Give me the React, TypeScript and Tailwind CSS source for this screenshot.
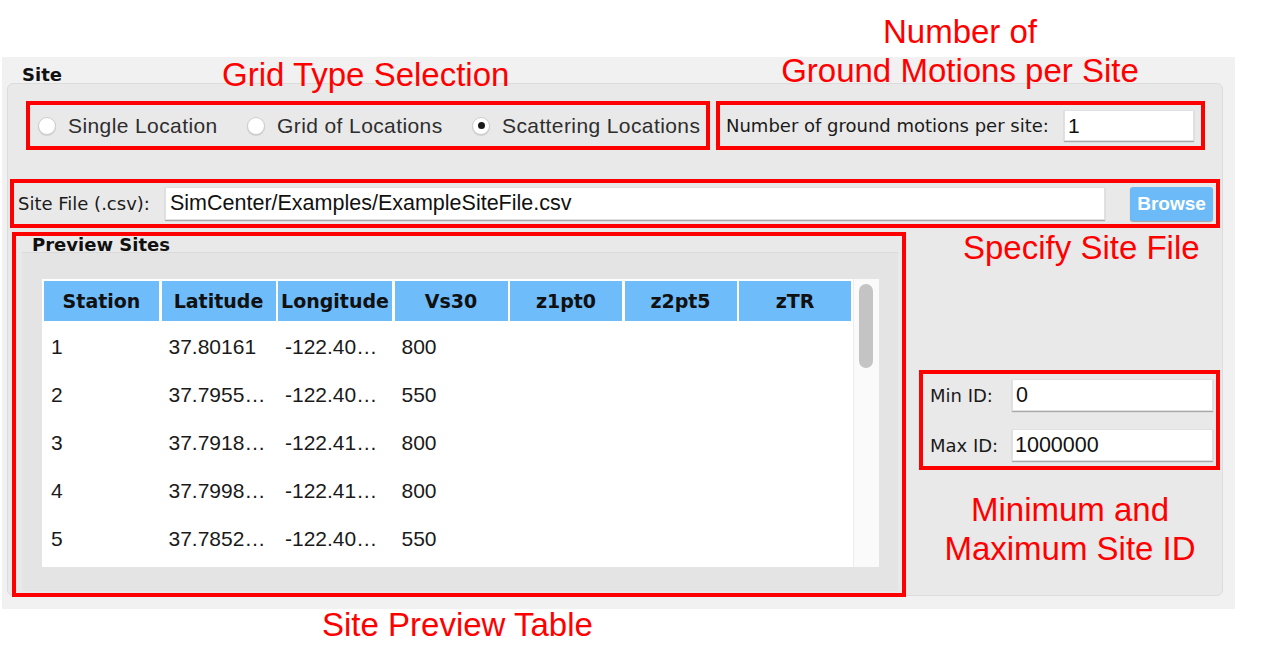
import React from 'react';

const ui = "font-['DejaVu_Sans',sans-serif]";
const mac = "font-['Liberation_Sans',Arial,sans-serif]";

const columns = [
  { name: 'Station', width: 'w-[115px]' },
  { name: 'Latitude', width: 'w-[114px]' },
  { name: 'Longitude', width: 'w-[114px]' },
  { name: 'Vs30', width: 'w-[113px]' },
  { name: 'z1pt0', width: 'w-[112px]' },
  { name: 'z2pt5', width: 'w-[112px]' },
  { name: 'zTR', width: 'w-[112px]' },
];

const rows = [
  ['1', '37.80161', '-122.40…', '800'],
  ['2', '37.7955…', '-122.40…', '550'],
  ['3', '37.7918…', '-122.41…', '800'],
  ['4', '37.7998…', '-122.41…', '800'],
  ['5', '37.7852…', '-122.40…', '550'],
];

const inputCls =
  'bg-white border border-[#e1e1e1] shadow-[0_1px_1px_rgba(0,0,0,0.28)] flex items-center text-[#111]';

function Radio({ label, checked, width }: { label: string; checked?: boolean; width: string }) {
  return (
    <div className={`flex items-center shrink-0 whitespace-nowrap ${width}`}>
      <span className="shrink-0 w-[18px] h-[18px] rounded-full bg-white border border-[#cdcdcd] shadow-[0_1px_1px_rgba(0,0,0,0.12)] flex items-center justify-center">
        {checked && <span className="w-[7px] h-[7px] rounded-full bg-[#1a1a1a]" />}
      </span>
      <span className={`${mac} ml-[12px] text-[21px] tracking-[0.4px] text-[#2e2e2e] leading-none`}>{label}</span>
    </div>
  );
}

export default function App() {
  return (
    <div className={`relative w-[1270px] h-[666px] bg-white overflow-hidden ${ui}`}>
      <div className="pt-[57px] pl-[2px]">
        {/* window */}
        <div className="w-[1233px] h-[552px] bg-[#f1f1f1]">
          <div className="relative z-10 ml-[20px] pt-[7px] h-[26px] text-[18px] leading-[22px] font-bold text-[#111]">
            Site
          </div>

          {/* Site group box */}
          <div className="ml-[5px] w-[1216px] h-[513px] rounded-[6px] border border-[#dcdcdc] bg-[#e9e9e9]">
            {/* row 1 */}
            <div className="flex mt-[17px] ml-[18px] gap-[6px]">
              <div className="w-[684px] h-[49px] border-4 border-[#ff0000] flex items-center pl-[8px] overflow-hidden">
                <Radio label="Single Location" width="w-[209px]" />
                <Radio label="Grid of Locations" width="w-[225px]" />
                <Radio label="Scattering Locations" checked width="w-[230px]" />
              </div>
              <div className="w-[489px] h-[49px] border-4 border-[#ff0000] flex items-center pl-[6px]">
                <span className="text-[18px] text-[#1a1a1a] whitespace-nowrap">Number of ground motions per site:</span>
                <div className={`${inputCls} ml-auto mr-[7px] w-[130px] h-[31px] pl-[3px]`}>
                  <span className={`${mac} text-[21px]`}>1</span>
                </div>
              </div>
            </div>

            {/* row 2 */}
            <div className="mt-[29px] ml-[2px] w-[1210px] h-[49px] border-4 border-[#ff0000] flex items-center pl-[4px]">
              <span className="w-[147px] text-[18px] text-[#1a1a1a] whitespace-nowrap">Site File (.csv):</span>
              <div className={`${inputCls} w-[940px] h-[33px] pl-[4px]`}>
                <span className={`${mac} text-[21.5px]`}>SimCenter/Examples/ExampleSiteFile.csv</span>
              </div>
              <button
                className={`${mac} ml-[25px] w-[83px] h-[34px] pt-[2px] rounded-[3px] bg-[#6cbbf8] text-white font-bold text-[19px] shadow-[0_1px_1px_rgba(0,0,0,0.3)]`}
              >
                Browse
              </button>
            </div>

            {/* row 3 */}
            <div className="flex mt-[4px] ml-[4px]">
              <div className="w-[894px] h-[365px] border-4 border-[#ff0000] flex flex-col">
                <div className="relative z-10 ml-[16px] h-[16px] text-[18px] leading-[18px] font-bold text-[#111]">
                  Preview Sites
                </div>
                <div className="flex-1 ml-[6px] mr-[4px] mb-[2px] bg-[#e4e4e4] border-t border-[#dadada] pt-[26px] pl-[20px]">
                  {/* table */}
                  <div className="w-[837px] h-[288px] bg-white flex">
                    <div className="w-[811px] pl-[2px] pt-[2px]">
                      <div className="flex gap-[2.5px] h-[40px]">
                        {columns.map((c) => (
                          <div
                            key={c.name}
                            className={`${c.width} h-full bg-[#6ebcf9] flex items-center justify-center overflow-hidden text-[19px] font-bold text-[#111] whitespace-nowrap`}
                          >
                            {c.name}
                          </div>
                        ))}
                      </div>
                      <div className="mt-[2px]">
                        {rows.map((r, i) => (
                          <div key={i} className="flex gap-[2.5px] h-[48px] items-center">
                            {columns.map((c, j) => (
                              <div key={c.name} className={`${c.width} pl-[7px] ${mac} text-[21px] text-[#1a1a1a] whitespace-nowrap overflow-hidden`}>
                                {r[j] ?? ''}
                              </div>
                            ))}
                          </div>
                        ))}
                      </div>
                    </div>
                    {/* scrollbar */}
                    <div className="w-[26px] h-full bg-[#fafafa] border-l border-[#ececec] pl-[5px] pt-[5px]">
                      <div className="w-[14px] h-[84px] rounded-full bg-[#c4c4c4]" />
                    </div>
                  </div>
                </div>
              </div>

              {/* right column */}
              <div className="ml-[13px] mt-[138px]">
                <div className="w-[301px] h-[100px] border-4 border-[#ff0000] pl-[7px] pt-[5px] flex flex-col gap-[18px]">
                  <div className="flex items-center">
                    <span className="w-[82px] text-[18px] text-[#1a1a1a]">Min ID:</span>
                    <div className={`${inputCls} w-[201px] h-[32px] pl-[3px]`}>
                      <span className={`${mac} text-[21.5px]`}>0</span>
                    </div>
                  </div>
                  <div className="flex items-center">
                    <span className="w-[82px] text-[18px] text-[#1a1a1a]">Max ID:</span>
                    <div className={`${inputCls} w-[201px] h-[32px] pl-[2px]`}>
                      <span className={`${mac} text-[21.5px]`}>1000000</span>
                    </div>
                  </div>
                </div>
              </div>
            </div>
          </div>
        </div>
      </div>

      {/* annotations */}
      <div className={`${mac} text-[#ff0000] text-[33px]`}>
        <div className="absolute left-[222px] top-[58px] leading-[34px] whitespace-nowrap">Grid Type Selection</div>
        <div className="absolute left-[760px] top-[12px] w-[400px] text-center leading-[39px]">
          Number of
          <br />
          Ground Motions per Site
        </div>
        <div className="absolute left-[963px] top-[231px] leading-[34px] whitespace-nowrap">Specify Site File</div>
        <div className="absolute left-[870px] top-[490px] w-[400px] text-center leading-[39px]">
          Minimum and
          <br />
          Maximum Site ID
        </div>
        <div className="absolute left-[322px] top-[608px] leading-[34px] whitespace-nowrap">Site Preview Table</div>
      </div>
    </div>
  );
}
